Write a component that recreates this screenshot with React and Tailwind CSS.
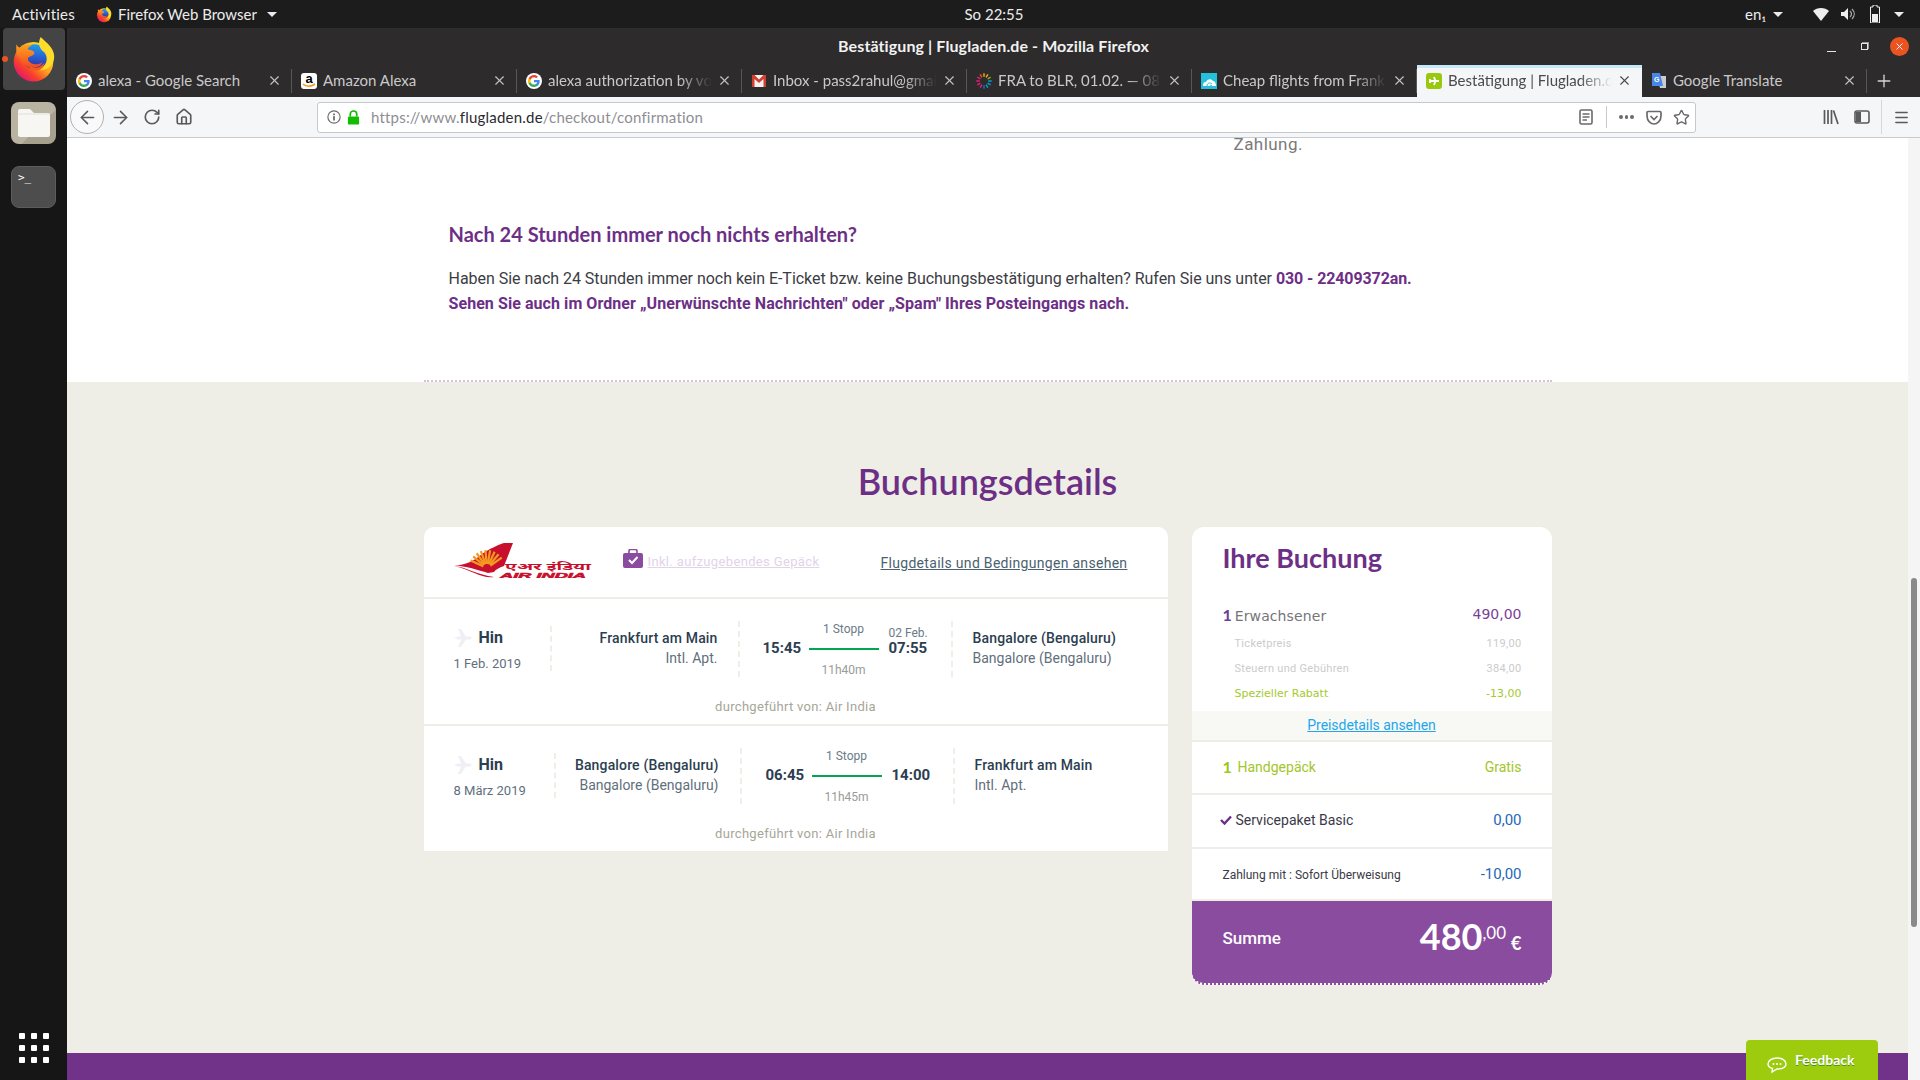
import React from "react";
import { ArrowLeft, ArrowRight, RotateCw, House, X, Plus, Star, Menu } from "lucide-react";

const ui = "font-['Lato','Noto_Sans',sans-serif]";
const rb = "font-['Roboto',sans-serif]";

function FirefoxLogo({ className }) {
  return (
    <svg viewBox="0 0 100 100" className={className}>
      <defs>
        <linearGradient id="ffo" x1="0.9" y1="0.2" x2="0.25" y2="0.95">
          <stop offset="0" stopColor="#ffe226" />
          <stop offset="0.45" stopColor="#ffa21f" />
          <stop offset="0.75" stopColor="#f8412a" />
          <stop offset="1" stopColor="#e6186c" />
        </linearGradient>
        <linearGradient id="ffb" x1="0.6" y1="0" x2="0.5" y2="1">
          <stop offset="0" stopColor="#1f9ff2" />
          <stop offset="0.6" stopColor="#2a55c8" />
          <stop offset="1" stopColor="#4a1f8a" />
        </linearGradient>
        <linearGradient id="fff" x1="0.3" y1="0" x2="0.3" y2="1">
          <stop offset="0" stopColor="#ffa31c" />
          <stop offset="1" stopColor="#f04a26" />
        </linearGradient>
      </defs>
      <circle cx="50" cy="55" r="44" fill="url(#ffo)" />
      <circle cx="53" cy="44" r="28" fill="url(#ffb)" />
      <path d="M66 0 C58 16 64 26 74 34 C84 46 80 66 64 74 C82 74 97 60 96 42 C95 24 80 14 66 0Z" fill="#ffdb2c" />
      <path d="M12 16 C14 20 16 22 20 24 C28 18 36 15 46 18 C42 22 36 24 38 28 C44 30 52 30 52 36 C50 42 42 42 38 46 C36 52 42 58 50 60 C56 62 64 60 70 56 C66 66 54 70 44 68 C30 66 22 54 24 42 C16 48 10 40 12 16Z" fill="url(#fff)" />
      <path d="M40 62 C50 72 64 70 74 58 C72 72 58 78 46 74 C42 72 40 68 40 62Z" fill="#f25a22" />
    </svg>
  );
}

function GoogleG({ className = "w-4 h-4" }) {
  return (
    <svg viewBox="0 0 48 48" className={className}>
      <circle cx="24" cy="24" r="24" fill="#fff" />
      <path fill="#4285F4" d="M41 24.500c0-1.200-.1-2.400-.3-3.500H24v6.700h9.700c-.4 2.200-1.700 4.100-3.600 5.300v4.400h5.800c3.400-3.100 5.100-7.700 5.100-12.900z" />
      <path fill="#34A853" d="M24 42c4.900 0 8.900-1.600 11.900-4.400l-5.800-4.500c-1.600 1.100-3.700 1.700-6.100 1.700-4.700 0-8.700-3.200-10.100-7.400H7.900v4.600C10.900 37.900 17 42 24 42z" />
      <path fill="#FBBC05" d="M13.900 27.900c-.8-2.200-.8-5.700 0-7.800v-4.600h-6c-2.500 4.900-2.500 12.100 0 17z" />
      <path fill="#EA4335" d="M24 13.100c2.600 0 5 .9 6.800 2.700l5.100-5.100C32.900 7.800 28.700 6 24 6 17 6 10.900 10.100 7.900 15.500l6 4.600c1.400-4.200 5.400-7 10.100-7z" />
    </svg>
  );
}

function AmazonIcon() {
  return (
    <div className="w-4 h-4 rounded-[3px] bg-white relative overflow-hidden flex justify-center shrink-0">
      <span className="font-['Liberation_Sans',sans-serif] font-bold text-[13px] leading-[12px] text-black">a</span>
      <svg viewBox="0 0 16 6" className="absolute left-0 bottom-0 w-4 h-[6px]">
        <path d="M2 1 C5 4 10 4 14 1" stroke="#f39a1f" strokeWidth="1.600" fill="none" />
      </svg>
    </div>
  );
}

function GmailIcon() {
  return (
    <svg viewBox="0 0 16 16" className="w-4 h-4 shrink-0">
      <rect x="1" y="2" width="14" height="12" fill="#f2f2f2" />
      <path d="M1 2 H3.500 L8 6.500 L12.500 2 H15 V14 H12.500 V6 L8 10 L3.500 6 V14 H1Z" fill="#d23f31" />
    </svg>
  );
}

function KiwiIcon() {
  const cols = ["#f5a623", "#f5a623", "#7ab800", "#00a0d2", "#00a0d2", "#00a0d2", "#1a6fb0", "#e61e78", "#e61e78", "#e61e78", "#e61e78", "#f0501e"];
  return (
    <svg viewBox="0 0 16 16" className="w-4 h-4 shrink-0">
      {cols.map((c, i) => (
        <line key={i} x1="8" y1="3.800" x2="8" y2="0.300" stroke={c} strokeWidth="1.500" transform={`rotate(${i * 30} 8 8)`} />
      ))}
    </svg>
  );
}

function CloudIcon() {
  return (
    <svg viewBox="0 0 16 16" className="w-4 h-4 shrink-0">
      <rect width="16" height="16" fill="#25c0dc" />
      <path d="M2 13 C2 9 4 9 5 9 C6 6 10 5 12 8 C14 8 15 10 15 13Z" fill="#fff" />
      <path d="M6 13 C6 10 9 9 11 11 M9 13 C9 12 10 12 11 13" stroke="#25c0dc" strokeWidth="1" fill="none" />
    </svg>
  );
}

function FlugladenIcon() {
  return (
    <svg viewBox="0 0 16 16" className="w-4 h-4 shrink-0">
      <rect width="16" height="16" rx="3" fill="#98c90e" />
      <path d="M3 8 H13 M8 4 L9.500 8 L8 12 M4 6 V10" stroke="#fff" strokeWidth="1.800" fill="none" />
    </svg>
  );
}

function TranslateIcon() {
  return (
    <svg viewBox="0 0 16 16" className="w-4 h-4 shrink-0">
      <path d="M6 3 H15 V15 H9Z" fill="#c9ccd0" />
      <path d="M1 0 H9 L12 13 H1Z" fill="#4a86e8" />
      <text x="3" y="8.500" fontSize="7" fontWeight="700" fill="#fff" fontFamily="Liberation Sans, sans-serif">G</text>
    </svg>
  );
}

const tabs = [
  { icon: <GoogleG className="w-4 h-4 shrink-0" />, t: "alexa - Google Search" },
  { icon: <AmazonIcon />, t: "Amazon Alexa" },
  { icon: <GoogleG className="w-4 h-4 shrink-0" />, t: "alexa authorization by voice", fade: true },
  { icon: <GmailIcon />, t: "Inbox - pass2rahul@gmail.com", fade: true },
  { icon: <KiwiIcon />, t: "FRA to BLR, 01.02. — 08.03.", fade: true },
  { icon: <CloudIcon />, t: "Cheap flights from Frankfurt", fade: true },
  { icon: <FlugladenIcon />, t: "Bestätigung | Flugladen.de", fade: true, active: true },
  { icon: <TranslateIcon />, t: "Google Translate" },
];

function Tab({ icon, t, fade, active, last }) {
  return (
    <div className={`w-[225px] h-[32px] pb-[1px] flex items-center relative shrink-0 ${active ? "bg-[#f5f6f7] text-[#4a4a4f]" : "text-[#c9c9c9]"}`}>
      {active ? <div className="absolute left-0 right-0 top-0 h-[3px] bg-[#c5e9f8]" /> : null}
      <div className="ml-[9px] w-4 flex justify-center shrink-0">{icon}</div>
      <div className={`ml-[6px] w-[164px] overflow-hidden whitespace-nowrap text-[15px] ${ui} ${fade ? "[mask-image:linear-gradient(to_right,black_80%,transparent)]" : ""}`}>{t}</div>
      <X className="ml-[5px] shrink-0" size={15} strokeWidth={1.800} color={active ? "#4a4a4f" : "#c4c4c4"} />
      {!active && !last ? <div className="absolute right-0 top-[4px] h-[24px] w-px bg-[#55575a]" /> : null}
    </div>
  );
}

function TopBar() {
  return (
    <div className={`h-[28px] bg-[#1c1c1c] text-[#ececec] flex items-center text-[15px] shrink-0 ${ui}`}>
      <span className="ml-[12px] w-[64px] tracking-[0.2px]">Activities</span>
      <FirefoxLogo className="ml-[20px] w-4 h-[17px]" />
      <span className="ml-[6px] w-[146px] whitespace-nowrap">Firefox Web Browser</span>
      <Caret className="ml-[3px]" />
      <span className="ml-[687px] w-[60px] text-center whitespace-nowrap">So 22:55</span>
      <span className="ml-[721px] w-[24px] whitespace-nowrap">en₁</span>
      <Caret className="ml-[4px]" />
      <svg viewBox="0 0 16 14" className="ml-[30px] w-4 h-[14px]"><path d="M0 4 C4 0 12 0 16 4 L8 14Z" fill="#eee" /></svg>
      <svg viewBox="0 0 16 14" className="ml-[11px] w-4 h-[14px]"><path d="M1 5 H4 L8 1 V13 L4 9 H1Z" fill="#eee" /><path d="M10 4 C12 6 12 8 10 10 M12 2 C15 5 15 9 12 12" stroke="#aaa" strokeWidth="1.200" fill="none" /></svg>
      <svg viewBox="0 0 10 18" className="ml-[14px] w-[10px] h-[18px]"><path d="M3 0 H7 V2 H9.500 V18 H.5 V2 H3Z" fill="none" stroke="#eee" strokeWidth="1" /><rect x="2" y="9" width="6" height="8" fill="#eee" /></svg>
      <Caret className="ml-[14px]" />
    </div>
  );
}

function Caret({ className }) {
  return <div className={`w-0 h-0 border-x-[5px] border-x-transparent border-t-[5px] border-t-[#ececec] ${className}`} />;
}

function TitleBar() {
  return (
    <div className="h-[37px] bg-[#2d2b2c] pb-[2px] flex items-center shrink-0 relative">
      <div className={`w-full text-center text-[16px] tracking-[0.1px] font-bold text-[#f2f2f2] ${ui}`}>Bestätigung | Flugladen.de - Mozilla Firefox</div>
      <div className="absolute right-[11px] top-[9px] flex items-center">
        <div className="w-[9px] h-px bg-[#e6e6e6] mt-[9px]" />
        <div className="ml-[25px] w-[7px] h-[7px] border border-[#e6e6e6] shadow-[1px_-1px_0_#999]" />
        <div className="ml-[22px] w-[19px] h-[19px] rounded-full bg-[#e95420] flex items-center justify-center">
          <X size={11} color="#fff" strokeWidth={2} />
        </div>
      </div>
    </div>
  );
}

function Toolbar() {
  return (
    <div className="h-[40px] bg-[#f5f6f7] border-b border-[#c8cacd] flex items-center shrink-0 text-[#5a5a5e] box-content">
      <div className="ml-[3px] w-[34px] h-[34px] rounded-full border border-[#b1b1b3] bg-[#f9f9fa] flex items-center justify-center">
        <ArrowLeft size={21} strokeWidth={1.800} />
      </div>
      <ArrowRight className="ml-[6px]" size={21} strokeWidth={1.800} />
      <RotateCw className="ml-[12px]" size={18} strokeWidth={2.200} />
      <House className="ml-[14px]" size={18} strokeWidth={2.200} />
      <div className="ml-[124px] w-[1379px] h-[31px] bg-white border border-[#c5c8cc] rounded-[3px] flex items-center">
        <svg viewBox="0 0 16 16" className="ml-[9px] w-[14px] h-[14px]"><circle cx="8" cy="8" r="7" fill="none" stroke="#6a6a6e" strokeWidth="1.300" /><rect x="7" y="7" width="2" height="5" fill="#6a6a6e" /><rect x="7" y="4" width="2" height="2" fill="#6a6a6e" /></svg>
        <svg viewBox="0 0 14 16" className="ml-[6px] w-[13px] h-[15px]"><path d="M3.500 7 V4.500 a3.500 3.500 0 0 1 7 0 V7" fill="none" stroke="#12bc00" strokeWidth="1.800" /><rect x="1" y="7" width="12" height="8.500" rx="1" fill="#12bc00" /></svg>
        <div className={`ml-[11px] w-[1200px] text-[15px] text-[#8e8e93] tracking-[0.2px] ${ui}`}>
          https://www.<span className="text-[#2a2a2e]">flugladen.de</span>/checkout/confirmation
        </div>
        <svg viewBox="0 0 14 16" className="ml-[8px] w-[14px] h-[16px]"><rect x="1" y="1" width="12" height="14" rx="1.500" fill="none" stroke="#6a6a6e" strokeWidth="1.600" /><path d="M3.500 5 H10.500 M3.500 8 H10.500 M3.500 11 H8" stroke="#6a6a6e" strokeWidth="1.300" /></svg>
        <div className="ml-[13px] w-px h-[22px] bg-[#c9c9cc]" />
        <div className="ml-[12px] w-[15px] flex gap-[2px]">
          <span className="w-[3.500px] h-[3.500px] rounded-full bg-[#6a6a6e] shrink-0" />
          <span className="w-[3.500px] h-[3.500px] rounded-full bg-[#6a6a6e] shrink-0" />
          <span className="w-[3.500px] h-[3.500px] rounded-full bg-[#6a6a6e] shrink-0" />
        </div>
        <svg viewBox="0 0 16 15" className="ml-[12px] w-4 h-[15px]"><path d="M2 1.500 H14 a1 1 0 0 1 1 1 V6 C15 11 11 14 8 14 C5 14 1 11 1 6 V2.500 a1 1 0 0 1 1-1Z" fill="none" stroke="#6a6a6e" strokeWidth="1.700" /><path d="M4.500 6 L8 9.500 L11.500 6" fill="none" stroke="#6a6a6e" strokeWidth="1.700" /></svg>
        <Star className="ml-[11px]" size={17} strokeWidth={2} color="#6a6a6e" />
      </div>
      <svg viewBox="0 0 16 16" className="ml-[127px] w-4 h-4"><path d="M1.500 1 V15 M5 1 V15 M8.500 1 V15 M10.500 1.500 L15 15" stroke="#5a5a5e" strokeWidth="1.700" fill="none" /></svg>
      <svg viewBox="0 0 16 16" className="ml-[15px] w-4 h-4"><rect x="1" y="2" width="14" height="12" rx="2" fill="none" stroke="#5a5a5e" strokeWidth="1.600" /><rect x="2" y="3" width="5" height="10" fill="#5a5a5e" /></svg>
      <div className="ml-[11px] w-px h-[34px] bg-[#d7d7db]" />
      <Menu className="ml-[11px]" size={17} strokeWidth={2} />
    </div>
  );
}

function Dock() {
  const dots = [0, 1, 2, 3, 4, 5, 6, 7, 8];
  return (
    <div className="w-[67px] bg-[#161616] flex flex-col items-center shrink-0 relative">
      <div className="w-[62px] h-[62px] rounded-[4px] bg-[#444444] flex items-center justify-center">
        <FirefoxLogo className="w-[45px] h-[47px]" />
      </div>
      <div className="absolute left-[2px] top-[28px] w-[6px] h-[6px] rounded-full bg-[#e95420]" />
      <div className="mt-[12px] w-[45px] h-[42px] rounded-[8px] bg-[linear-gradient(135deg,#b9b3a2_60%,#a6a08f_60%)] flex items-center justify-center">
        <svg viewBox="0 0 32 28" className="w-[32px] h-[28px]"><path d="M2 0 H12 L16 4 H30 a2 2 0 0 1 2 2 V26 a2 2 0 0 1-2 2 H2 a2 2 0 0 1-2-2 V2 a2 2 0 0 1 2-2Z" fill="#f7f6f3" /><path d="M0 5 H32" stroke="#dedbd2" strokeWidth="0.800" /></svg>
      </div>
      <div className="mt-[22px] w-[45px] h-[42px] rounded-[8px] bg-[#4d4d4d] border border-[#5c5c5c] px-[6px] py-[5px]">
        <span className="block font-['DejaVu_Sans_Mono',monospace] text-[11px] leading-[12px] text-white">&gt;_</span>
      </div>
      <div className="mt-auto mb-[17px] grid grid-cols-3 gap-[6px]">
        {dots.map((d) => <span key={d} className="w-[6px] h-[6px] bg-white rounded-[1px]" />)}
      </div>
    </div>
  );
}

function AirIndiaLogo() {
  const rays = [205, 220, 235, 250, 265, 280, 295, 310, 325];
  return (
    <svg viewBox="0 0 138 36" className="w-[138px] h-[36px] shrink-0">
      <path d="M0 23.500 C12 23 20 19 28 12 C35 7 44 3 50 1 L59 1 L50 24 C45 26 42 27 40 30 L34 31 C24 28 12 24 0 23.500Z" fill="#c8102e" />
      <path d="M0 24 C12 25 24 33 40 35 C28 37 18 28 0 24Z" fill="#c8102e" />
      {rays.map((r) => (
        <path key={r} d="M33 26 L15 26" stroke="#f39a1f" strokeWidth="2.200" transform={`rotate(${r - 180} 33 26)`} />
      ))}
      <circle cx="33" cy="26" r="4" fill="#c8102e" />
      <text x="51" y="28" fontSize="9.500" fontWeight="700" fill="#c8102e" fontFamily="Noto Sans, sans-serif" textLength="86" lengthAdjust="spacingAndGlyphs">एअर इंडिया</text>
      <text x="46" y="36" fontSize="7.500" fontWeight="900" fontStyle="italic" fill="#c8102e" fontFamily="Liberation Sans, sans-serif" textLength="86" lengthAdjust="spacingAndGlyphs" stroke="#c8102e" strokeWidth="0.500">AIR INDIA</text>
    </svg>
  );
}

function Plane() {
  return (
    <svg viewBox="0 0 18 18" className="w-[18px] h-[18px] shrink-0">
      <path d="M0 9 L4 7.500 L7 7.500 L4 0 L7 0 L12 7.500 L16 7.500 C18 8 18 10 16 10.500 L12 10.500 L7 18 L4 18 L7 10.500 L4 10.500Z" fill="#f0eff5" />
    </svg>
  );
}

function Sep({ h, mt }) {
  return <div className={`w-[2px] border-l-2 border-dashed border-[#efefe8] shrink-0 ${h} ${mt}`} />;
}

function Flight({ date, col1, col2, from1, from2, dep, arr, arrDate, stop, dur, to1, to2, padTime, padRight }) {
  return (
    <div className="h-[125px] pt-[22px] flex flex-col shrink-0">
      <div className="h-[56px] flex">
        <div className={`${col1} shrink-0 pl-[30px] pt-[7px]`}>
          <div className="flex items-center h-[20px]">
            <Plane />
            <span className={`ml-[7px] text-[16px] font-bold text-[#2c3e50] ${rb}`}>Hin</span>
          </div>
          <div className={`mt-[8px] text-[13px] leading-[16px] text-[#5f6f7d] whitespace-nowrap ${rb}`}>{date}</div>
        </div>
        <Sep h="h-[45px]" mt="mt-[5px]" />
        <div className={`${col2} shrink-0 ${padRight} pt-[7px] text-right text-[14px] leading-[20px] whitespace-nowrap ${rb}`}>
          <div className="font-medium tracking-[0.15px] text-[#2c3e50]">{from1}</div>
          <div className="text-[#5f6f7d]">{from2}</div>
        </div>
        <Sep h="h-[56px]" />
        <div className={`w-[211px] shrink-0 ${padTime} flex`}>
          <div className={`w-[46px] pt-[19px] text-[15px] leading-[16px] font-bold text-[#2c3e50] ${rb}`}>{dep}</div>
          <div className="w-[70px] flex flex-col items-center">
            <div className={`text-[12px] leading-[16px] text-[#6b7b88] whitespace-nowrap ${rb}`}>{stop}</div>
            <div className="mt-[11px] h-[2px] w-[70px] bg-[#00a651]" />
            <div className={`mt-[13px] text-[12px] leading-[14px] text-[#999c98] whitespace-nowrap ${rb}`}>{dur}</div>
          </div>
          <div className={`ml-[10px] ${rb}`}>
            <div className="mt-[5px] h-[14px] text-[12px] leading-[14px] text-[#6b7b88] whitespace-nowrap">{arrDate}</div>
            <div className="text-[15px] leading-[16px] font-bold text-[#2c3e50]">{arr}</div>
          </div>
        </div>
        <Sep h="h-[56px]" />
        <div className={`pl-[20px] pt-[7px] text-[14px] leading-[20px] whitespace-nowrap ${rb}`}>
          <div className="font-medium tracking-[0.15px] text-[#2c3e50]">{to1}</div>
          <div className="text-[#5f6f7d]">{to2}</div>
        </div>
      </div>
      <div className={`mt-[22px] text-center text-[13px] leading-[16px] tracking-[0.3px] text-[#a6a698] ${rb}`}>durchgeführt von: Air India</div>
    </div>
  );
}

function LeftCard() {
  return (
    <div className="w-[744px] bg-white rounded-t-[10px] shrink-0">
      <div className="h-[72px] border-b-2 border-[#eeeee6] flex items-start">
        <div className="ml-[30px] mt-[15px]"><AirIndiaLogo /></div>
        <svg viewBox="0 0 20 19" className="ml-[31px] mt-[22px] w-[20px] h-[19px] shrink-0">
          <path d="M6 4 V2 a1.500 1.500 0 0 1 1.500-1.500 H12.500 A1.500 1.500 0 0 1 14 2 V4" fill="none" stroke="#8a4c9f" strokeWidth="1.600" />
          <rect x="0" y="4" width="20" height="15" rx="2" fill="#8a4c9f" />
          <path d="M6 11 L9 14 L14.500 8" fill="none" stroke="#fff" strokeWidth="2" />
        </svg>
        <a className={`ml-[5px] mt-[27px] text-[13px] leading-[16px] tracking-[0.35px] underline text-[#e3d3ea] whitespace-nowrap w-[171px] ${rb}`}>Inkl. aufzugebendes Gepäck</a>
        <a className={`ml-[62px] mt-[28px] text-[14px] leading-[16px] tracking-[0.3px] underline text-[#4c5f70] whitespace-nowrap ${rb}`}>Flugdetails und Bedingungen ansehen</a>
      </div>
      <div className="border-b-2 border-[#eeeee6]">
        <Flight col1="w-[126px]" col2="w-[186px]" padRight="pr-[20px]" padTime="pl-[23px]" date="1 Feb. 2019" from1="Frankfurt am Main" from2="Intl. Apt." dep="15:45" arr="07:55" arrDate="02 Feb." stop="1 Stopp" dur="11h40m" to1="Bangalore (Bengaluru)" to2="Bangalore (Bengaluru)" />
      </div>
      <Flight col1="w-[130px]" col2="w-[184px]" padRight="pr-[21px]" padTime="pl-[24px]" date="8 März 2019" from1="Bangalore (Bengaluru)" from2="Bangalore (Bengaluru)" dep="06:45" arr="14:00" arrDate="" stop="1 Stopp" dur="11h45m" to1="Frankfurt am Main" to2="Intl. Apt." />
    </div>
  );
}

function PriceRow({ l, v, cls, font }) {
  return (
    <div className={`mt-[9px] pl-[43px] pr-[30px] flex justify-between text-[11px] leading-[16px] ${cls} ${font}`}>
      <span>{l}</span><span>{v}</span>
    </div>
  );
}

function RightCard() {
  return (
    <div className="w-[360px] bg-white rounded-[12px] shrink-0 overflow-hidden flex flex-col">
      <div className={`pl-[31px] pt-[15px] text-[27px] leading-[32px] font-bold text-[#6d2f86] ${ui}`}>Ihre Buchung</div>
      <div className="mt-[31px] pl-[31px] pr-[30px] flex justify-between items-center h-[20px] font-['DejaVu_Sans',sans-serif]">
        <div className="flex items-baseline">
          <span className={`text-[16px] font-bold text-[#6d3f92] ${ui}`}>1</span>
          <span className="ml-[3px] text-[14px] tracking-[0.1px] text-[#77757a]">Erwachsener</span>
        </div>
        <span className="text-[14px] -mt-[2px] text-[#7b3f98]">490,00</span>
      </div>
      <div className="mt-[2px]"><PriceRow l="Ticketpreis" v="119,00" cls="text-[#cbcbcb] tracking-[0.3px]" font={rb} /></div>
      <PriceRow l="Steuern und Gebühren" v="384,00" cls="text-[#cbcbcb] tracking-[0.3px]" font={rb} />
      <PriceRow l="Spezieller Rabatt" v="-13,00" cls="text-[#a4c92e]" font="font-['DejaVu_Sans',sans-serif]" />
      <div className={`mt-[9px] h-[31px] bg-[#f8f9f4] border-b-2 border-[#eeeee6] flex items-center justify-center text-[14px] tracking-[-0.05px] text-[#1ea7ec] underline ${rb}`}>Preisdetails ansehen</div>
      <div className={`h-[53px] pb-[1px] border-b-2 border-[#eeeee6] pl-[31px] pr-[30px] flex items-center justify-between text-[14px] text-[#a2c62b] ${rb}`}>
        <div className="flex items-center">
          <span className={`text-[16px] font-bold text-[#a2c617] w-[15px] ${ui}`}>1</span>
          <span>Handgepäck</span>
        </div>
        <span>Gratis</span>
      </div>
      <div className={`h-[54px] pb-[2px] border-b-2 border-[#eeeee6] pl-[28px] pr-[30px] flex items-center justify-between ${rb}`}>
        <div className="flex items-center">
          <svg viewBox="0 0 12 10" className="w-[12px] h-[10px]"><path d="M1 5 L4.500 8.500 L11 1.500" fill="none" stroke="#6d2f86" strokeWidth="2.400" /></svg>
          <span className="ml-[4px] text-[14px] text-[#3a3a46]">Servicepaket Basic</span>
        </div>
        <span className="text-[15px] text-[#2468b8]">0,00</span>
      </div>
      <div className={`h-[52px] border-b-2 border-[#eeeee6] pl-[31px] pr-[30px] flex items-center justify-between ${rb}`}>
        <span className="text-[12px] text-[#3a3a46] mt-[1px]">Zahlung mit : Sofort Überweisung</span>
        <span className="text-[15px] text-[#2468b8]">-10,00</span>
      </div>
      <div className="h-[84px] bg-[#8a4c9f] border-b-2 border-dotted border-white rounded-b-[12px] pl-[30px] pr-[30px] flex justify-between text-white">
        <span className={`ml-[1px] mt-[25px] text-[17px] leading-[24px] font-medium ${rb}`}>Summe</span>
        <div className={`mt-[13px] h-[40px] flex items-baseline ${ui}`}>
          <span className="text-[36px] leading-[44px] font-bold">480</span>
          <span className="text-[17px] leading-[17px] relative -top-[11px]">,00</span>
          <span className="ml-[5px] text-[18px] font-bold">€</span>
        </div>
      </div>
    </div>
  );
}

function Page() {
  return (
    <div className="flex-1 relative flex flex-col overflow-hidden">
      <div className="h-[244px] bg-white shrink-0 overflow-hidden">
        <div className="mx-auto w-[1128px] h-[248px] border-b-2 border-dotted border-[#d3c5d9]">
          <div className={`-mt-[4px] ml-[810px] text-[17px] leading-[20px] tracking-[0.45px] text-[#7a7a7a] ${rb}`}>Zahlung.</div>
          <div className={`ml-[25px] mt-[68px] text-[20px] leading-[24px] font-bold text-[#6d2f86] ${ui}`}>Nach 24 Stunden immer noch nichts erhalten?</div>
          <div className={`ml-[25px] mt-[20px] text-[16px] leading-[25px] text-[#3c3c44] ${rb}`}>
            <div className="tracking-[-0.03px]">Haben Sie nach 24 Stunden immer noch kein E-Ticket bzw. keine Buchungsbestätigung erhalten? Rufen Sie uns unter <b className="text-[#6d2f86] tracking-[-0.1px]">030 - 22409372an.</b></div>
            <div className="font-bold tracking-[0.07px] text-[#6d2f86]">Sehen Sie auch im Ordner „Unerwünschte Nachrichten" oder „Spam" Ihres Posteingangs nach.</div>
          </div>
        </div>
      </div>
      <div className="h-[671px] bg-[#eeeee6] shrink-0 pt-[79px]">
        <div className={`text-center text-[36px] leading-[40px] font-semibold text-[#6d2f86] ${ui}`}>Buchungsdetails</div>
        <div className="mx-auto mt-[26px] w-[1128px] flex items-start justify-between">
          <LeftCard />
          <RightCard />
        </div>
      </div>
      <div className="flex-1 bg-[#713389]" />
      <div className="absolute right-[30px] bottom-0 w-[132px] h-[40px] bg-[#9ccc0d] rounded-t-[4px] flex items-start">
        <svg viewBox="0 0 20 16" className="ml-[21px] mt-[17px] w-[20px] h-[16px]">
          <path d="M10 1 C15 1 19 3.500 19 7 C19 10.500 15 12 10 12 L5 15 L5.500 11.500 C3 10.800 1 9.500 1 7 C1 3.500 5 1 10 1Z" fill="none" stroke="#fff" strokeWidth="1.400" />
          <circle cx="6.500" cy="7" r="1" fill="#fff" /><circle cx="10" cy="7" r="1" fill="#fff" /><circle cx="13.500" cy="7" r="1" fill="#fff" />
        </svg>
        <span className={`ml-[8px] mt-[11px] text-[14px] leading-[18px] font-bold text-white [text-shadow:0_1px_0_#4f8f1e] ${ui}`}>Feedback</span>
      </div>
    </div>
  );
}

export default function App() {
  return (
    <div className="w-[1920px] h-[1080px] overflow-hidden flex flex-col bg-[#161616]">
      <TopBar />
      <div className="flex-1 flex min-h-0">
        <Dock />
        <div className="flex-1 flex flex-col min-w-0">
          <TitleBar />
          <div className="h-[32px] bg-[#2d2b2c] flex items-start shrink-0">
            {tabs.map((t, i) => <Tab key={i} {...t} />)}
            <div className="h-[24px] w-px bg-[#55575a] mt-[4px] -ml-px" />
            <Plus className="ml-[7px] mt-[6px]" size={20} strokeWidth={1.600} color="#d6d6d6" />
          </div>
          <Toolbar />
          <div className="flex-1 flex min-h-0">
            <Page />
            <div className="w-[12px] bg-[#f5f5f5] shrink-0 pl-[3px] pt-[440px]">
              <div className="w-[6px] h-[349px] rounded-[3px] bg-[#8a8a8a]" />
            </div>
          </div>
        </div>
      </div>
    </div>
  );
}
